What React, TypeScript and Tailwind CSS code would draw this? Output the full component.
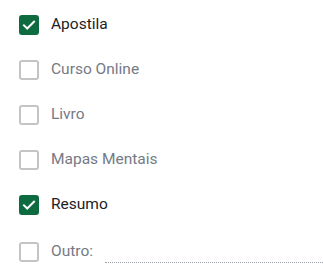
import React from "react";

const options = [
  { label: "Apostila", checked: true },
  { label: "Curso Online", checked: false },
  { label: "Livro", checked: false },
  { label: "Mapas Mentais", checked: false },
  { label: "Resumo", checked: true },
];

function Box({ checked }: { checked: boolean }) {
  if (checked) {
    return (
      <div className="flex h-[20px] w-[20px] shrink-0 items-center justify-center rounded-[3px] bg-[#0d6b3f]">
        <svg width="16" height="16" viewBox="0 0 24 24" fill="none">
          <path d="M4.5 12.5l4.8 4.8L19.5 7" stroke="white" strokeWidth="3" strokeLinecap="square" />
        </svg>
      </div>
    );
  }
  return <div className="h-[20px] w-[20px] shrink-0 rounded-[3px] border-2 border-[#c4c4c4]" />;
}

export default function App() {
  return (
    <div className="h-[276px] w-[323px] bg-white pl-[19px] pt-[2px] font-['Roboto',sans-serif] text-[15.5px]">
      {options.map((o) => (
        <div key={o.label} className="flex h-[45px] items-center gap-[12px]">
          <Box checked={o.checked} />
          <span className={o.checked ? "text-[#202124]" : "text-[#757a85]"}>{o.label}</span>
        </div>
      ))}
      <div className="mt-[2px] flex h-[45px] items-center gap-[12px]">
        <Box checked={false} />
        <span className="text-[#757a85]">Outro:</span>
        <div className="mt-[22px] h-0 flex-1 border-b border-dotted border-[#9aa0a6]" />
      </div>
    </div>
  );
}
